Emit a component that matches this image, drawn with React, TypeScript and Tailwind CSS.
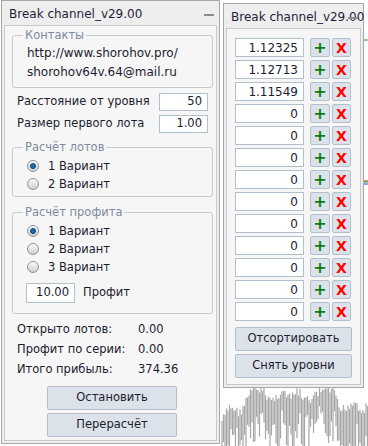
import React from "react";

const levels = [
  "1.12325",
  "1.12713",
  "1.11549",
  "0",
  "0",
  "0",
  "0",
  "0",
  "0",
  "0",
  "0",
  "0",
  "0",
];

// rough outline of the price bars peeking out under the windows
const chartBase: [number, number][] = [
  [222, 420],
  [230, 405],
  [240, 412],
  [250, 392],
  [258, 388],
  [265, 392],
  [272, 400],
  [282, 390],
  [290, 398],
  [298, 390],
  [305, 400],
  [312, 398],
  [320, 390],
  [328, 388],
  [334, 392],
  [340, 410],
  [348, 405],
  [355, 400],
  [362, 410],
  [368, 405],
];

function baseAt(x: number) {
  for (let i = 0; i < chartBase.length - 1; i++) {
    const [x0, y0] = chartBase[i];
    const [x1, y1] = chartBase[i + 1];
    if (x >= x0 && x <= x1) return y0 + ((y1 - y0) * (x - x0)) / (x1 - x0);
  }
  return 410;
}

function Chart() {
  const bars = [];
  let seed = 7;
  const rnd = () => {
    seed = (seed * 9301 + 49297) % 233280;
    return seed / 233280;
  };
  for (let x = 222; x <= 368; x += 1.5) {
    const top = baseAt(x) + rnd() * 10 - 4;
    const bottom = Math.min(446, top + 18 + rnd() * 40);
    bars.push(
      <line key={x} x1={x} x2={x} y1={top} y2={bottom} stroke="#a6a6a6" strokeWidth="1.2" />
    );
  }
  return (
    <svg className="absolute left-0 top-0" width="368" height="446">
      {bars}
      <line x1="364" x2="368" y1="40" y2="40" stroke="#1a9a1a" strokeWidth="1" />
      <line x1="364" x2="368" y1="181" y2="181" stroke="#d02020" strokeWidth="1" />
      <line x1="364" x2="368" y1="182" y2="182" stroke="#20a020" strokeWidth="1" />
      <line x1="364" x2="368" y1="184" y2="184" stroke="#2040e0" strokeWidth="1" />
    </svg>
  );
}

function TitleBar({ title }: { title: string }) {
  return (
    <div className="relative h-[22px] flex items-center pl-[5px] pr-[14px] whitespace-nowrap text-[12px] text-[#1e1e3a]">
      <span>{title}</span>
      <span className="absolute right-[3px] top-[11px] w-[10px] h-[2px] bg-[#8c8c8c]" />
    </div>
  );
}

function Radio({ checked, label }: { checked?: boolean; label: string }) {
  return (
    <div className="h-[18px] leading-[18px] flex items-center pl-[14px]">
      <span className="w-[12px] h-[12px] rounded-full border border-[#8f9396] bg-linear-to-b from-[#fbfbfb] to-[#cdd0d3] flex items-center justify-center">
        {checked && (
          <span className="w-[6px] h-[6px] rounded-full bg-[#1670b8] border border-[#0b3f6b]" />
        )}
      </span>
      <span className="ml-[9px]">{label}</span>
    </div>
  );
}

function Field({ value, className }: { value: string; className: string }) {
  return (
    <div
      className={`bg-white border border-[#b2bfcc] flex items-center justify-end pr-[5px] ${className}`}
    >
      {value}
    </div>
  );
}

function LeftWindow() {
  return (
    <div className="ml-[1px] w-[219px] h-[444px] border border-[#a7a7a7] bg-[#eeeeee] p-[2px] flex flex-col">
      <TitleBar title="Break channel_v29.00" />
      <div className="flex-1 border border-[#c9c9c9] bg-[#f6f6f6] flex flex-col">
        <fieldset className="mt-[1px] ml-[7px] mr-[3px] border border-[#c3cad2] rounded-[3px] pt-[1px] pb-[5px]">
          <legend className="ml-[10px] px-[2px] leading-[16px] text-[#7d8b9c]">Контакты</legend>
          <div className="pl-[14px] leading-[19px] text-[12px]">
            <div>http://www.shorohov.pro/</div>
            <div>shorohov64v.64@mail.ru</div>
          </div>
        </fieldset>
        <div className="mt-[3px] pl-[12px] pr-[8px]">
          <div className="h-[22px] flex items-center justify-between">
            <span>Расстояние от уровня</span>
            <Field value="50" className="w-[49px] h-[18px]" />
          </div>
          <div className="h-[22px] flex items-center justify-between">
            <span>Размер первого лота</span>
            <Field value="1.00" className="w-[49px] h-[18px]" />
          </div>
        </div>
        <fieldset className="mt-[4px] ml-[7px] mr-[3px] border border-[#c3cad2] rounded-[3px] pb-[3px] pt-[2px]">
          <legend className="ml-[10px] px-[2px] leading-[16px] text-[#7d8b9c]">Расчёт лотов</legend>
          <Radio checked label="1 Вариант" />
          <Radio label="2 Вариант" />
        </fieldset>
        <fieldset className="mt-[7px] ml-[7px] mr-[3px] border border-[#c3cad2] rounded-[3px] pb-[10px] pt-[2px]">
          <legend className="ml-[10px] px-[2px] leading-[16px] text-[#7d8b9c]">Расчёт профита</legend>
          <Radio checked label="1 Вариант" />
          <Radio label="2 Вариант" />
          <Radio label="3 Вариант" />
          <div className="mt-[7px] h-[20px] flex items-center pl-[13px]">
            <Field value="10.00" className="w-[49px] h-[20px]" />
            <span className="ml-[8px]">Профит</span>
          </div>
        </fieldset>
        <div className="mt-[5px] pl-[12px] leading-[20px]">
          <div className="flex">
            <span className="w-[121px]">Открыто лотов:</span>
            <span>0.00</span>
          </div>
          <div className="flex">
            <span className="w-[121px]">Профит по серии:</span>
            <span>0.00</span>
          </div>
          <div className="flex">
            <span className="w-[121px]">Итого прибыль:</span>
            <span>374.36</span>
          </div>
        </div>
        <div className="mt-[7px] ml-[42px] flex flex-col gap-[3px]">
          <button className="w-[130px] h-[24px] bg-[#dce2ea] border border-[#b3bfcc] rounded-[2px]">
            Остановить
          </button>
          <button className="w-[130px] h-[24px] bg-[#dce2ea] border border-[#b3bfcc] rounded-[2px]">
            Перерасчёт
          </button>
        </div>
      </div>
    </div>
  );
}

function RightWindow() {
  return (
    <div className="mt-[3px] ml-[3px] w-[141px] h-[385px] border border-[#a7a7a7] bg-[#eeeeee] p-[2px] flex flex-col">
      <TitleBar title="Break channel_v29.00" />
      <div className="flex-1 border border-[#c9c9c9] bg-[#f6f6f6] pt-[9px] pl-[8px] flex flex-col">
        <div className="flex flex-col gap-[3px]">
          {levels.map((v, i) => (
            <div key={i} className="flex items-center h-[19px]">
              <Field value={v} className="w-[69px] h-[19px] text-[12px]" />
              <span className="ml-[6px] w-[20px] h-[19px] bg-[#dce2ea] border border-[#b3bfcc] rounded-[2px] flex items-center justify-center text-[#0b7d0b] font-bold text-[16px] leading-none">
                +
              </span>
              <span className="ml-[2px] w-[19px] h-[19px] bg-[#dce2ea] border border-[#b3bfcc] rounded-[2px] flex items-center justify-center text-[#ff0000] font-bold text-[14px] leading-none">
                X
              </span>
            </div>
          ))}
        </div>
        <div className="mt-[6px] flex flex-col gap-[3px]">
          <button className="w-[117px] h-[24px] bg-[#dce2ea] border border-[#b3bfcc] rounded-[2px]">
            Отсортировать
          </button>
          <button className="w-[117px] h-[24px] bg-[#dce2ea] border border-[#b3bfcc] rounded-[2px]">
            Снять уровни
          </button>
        </div>
      </div>
    </div>
  );
}

export default function App() {
  return (
    <div className="relative w-[368px] h-[446px] bg-white overflow-hidden font-['DejaVu_Sans',sans-serif] text-[11.5px] text-[#1c1c30]">
      <Chart />
      <div className="relative flex items-start">
        <LeftWindow />
        <RightWindow />
      </div>
    </div>
  );
}
